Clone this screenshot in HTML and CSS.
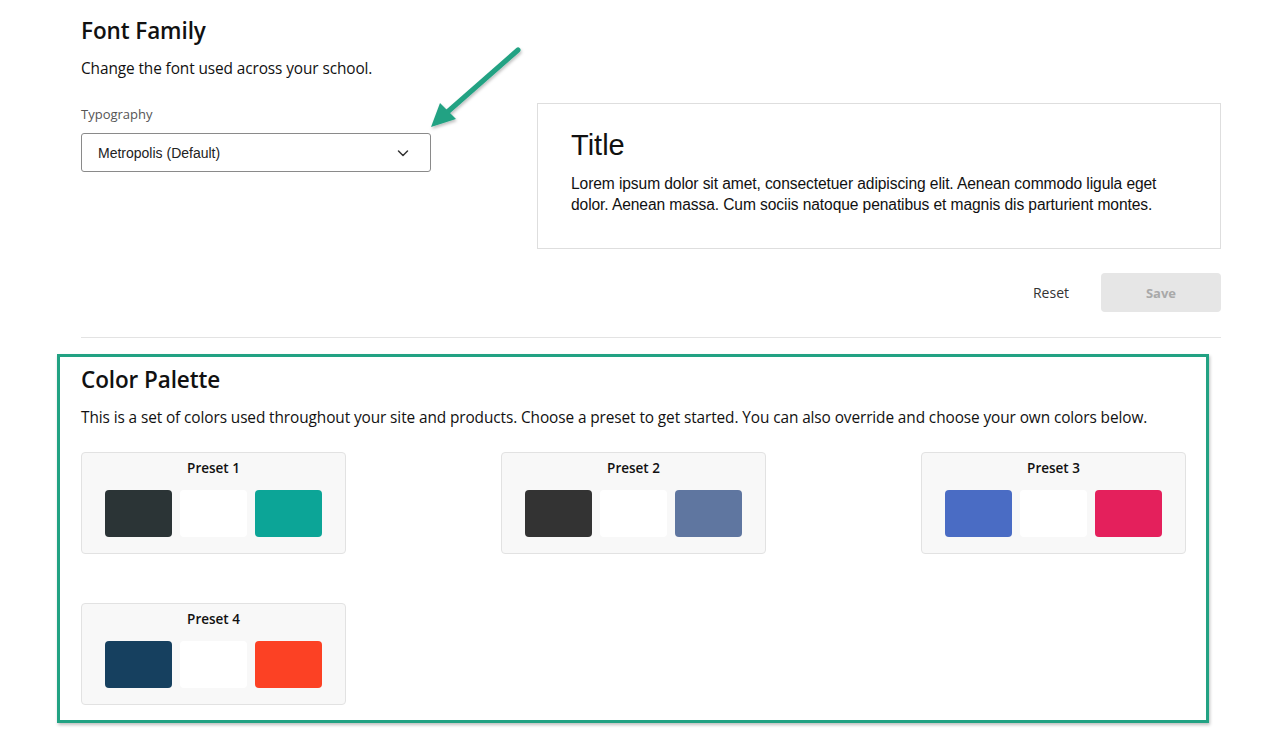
FILE: index.html
```html
<!DOCTYPE html>
<html lang="en">
<head>
    <meta charset="UTF-8">
    <meta name="viewport" content="width=device-width, initial-scale=1.0">
    <title>Branding - Fonts and Colors</title>
    <link rel="stylesheet" href="styles.css">
</head>
<body>
    <div class="page">
        <!-- Font family settings -->
        <section class="font-section">
            <div class="font-row">
                <div class="font-settings">
                    <h2 class="section-title">Font Family</h2>
                    <p class="section-desc">Change the font used across your school.</p>
                    <label class="field-label" for="typography">Typography</label>
                    <div class="select">
                        <span class="select-value" id="typography">Metropolis (Default)</span>
                        <svg class="select-chevron" width="14" height="14" viewBox="0 0 14 14">
                            <path d="M2.5 5 L7 9.5 L11.5 5" fill="none" stroke="#333" stroke-width="1.5" stroke-linecap="round" stroke-linejoin="round"/>
                        </svg>
                    </div>
                </div>
                <div class="preview">
                    <div class="preview-title">Title</div>
                    <p class="preview-text">Lorem ipsum dolor sit amet, consectetuer adipiscing elit. Aenean commodo ligula eget dolor. Aenean massa. Cum sociis natoque penatibus et magnis dis parturient montes.</p>
                </div>
            </div>
            <div class="actions">
                <button type="button" class="btn-reset">Reset</button>
                <button type="button" class="btn-save" disabled>Save</button>
            </div>

            <!-- pointer callout -->
            <svg class="callout-arrow" width="110" height="100" viewBox="0 0 110 100">
                <defs>
                    <filter id="arrowShadow" x="-20%" y="-20%" width="140%" height="140%">
                        <feDropShadow dx="1" dy="2" stdDeviation="1.5" flood-color="#000" flood-opacity="0.25"/>
                    </filter>
                </defs>
                <g filter="url(#arrowShadow)">
                    <line x1="96" y1="11" x2="22" y2="76" stroke="#22a283" stroke-width="5" stroke-linecap="round"/>
                    <polygon points="9,88 18,64 34,80" fill="#22a283"/>
                </g>
            </svg>
        </section>

        <hr class="divider">

        <!-- Color palette presets -->
        <section class="palette-section">
            <h2 class="section-title">Color Palette</h2>
            <p class="section-desc">This is a set of colors used throughout your site and products. Choose a preset to get started. You can also override and choose your own colors below.</p>

            <div class="presets">
                <div class="preset">
                    <div class="preset-name">Preset 1</div>
                    <div class="swatches">
                        <span class="swatch" style="background:#2b3436"></span>
                        <span class="swatch" style="background:#ffffff"></span>
                        <span class="swatch" style="background:#0ca597"></span>
                    </div>
                </div>
                <div class="preset">
                    <div class="preset-name">Preset 2</div>
                    <div class="swatches">
                        <span class="swatch" style="background:#333333"></span>
                        <span class="swatch" style="background:#ffffff"></span>
                        <span class="swatch" style="background:#5f76a0"></span>
                    </div>
                </div>
                <div class="preset">
                    <div class="preset-name">Preset 3</div>
                    <div class="swatches">
                        <span class="swatch" style="background:#4a6cc4"></span>
                        <span class="swatch" style="background:#ffffff"></span>
                        <span class="swatch" style="background:#e4205c"></span>
                    </div>
                </div>
                <div class="preset">
                    <div class="preset-name">Preset 4</div>
                    <div class="swatches">
                        <span class="swatch" style="background:#16405f"></span>
                        <span class="swatch" style="background:#ffffff"></span>
                        <span class="swatch" style="background:#fc4124"></span>
                    </div>
                </div>
            </div>

            <div class="highlight-frame"></div>
        </section>
    </div>
</body>
</html>
```

FILE: styles.css
```css
body {
    margin: 0;
    font-family: "Open Sans", "Noto Sans", sans-serif;
    color: #111;
    background-color: #fff;
}
.page {
    width: 1140px;
    margin-left: 81px;
    padding-top: 15px;
}
.font-section {
    position: relative;
}
.font-row {
    display: flex;
    justify-content: space-between;
}
.font-settings {
    width: 350px;
}
.section-title {
    margin: 0;
    font-size: 22.5px;
    font-weight: 600;
    line-height: 32px;
    letter-spacing: -0.1px;
}
.section-desc {
    margin: 11px 0 0;
    font-size: 15.4px;
    line-height: 22px;
    letter-spacing: -0.1px;
}
.field-label {
    display: block;
    margin-top: 25px;
    font-size: 13px;
    line-height: 18px;
    color: #555;
}
.select {
    display: flex;
    align-items: center;
    justify-content: space-between;
    height: 39px;
    margin-top: 10px;
    padding: 0 20px 0 16px;
    border: 1px solid #8a8a8a;
    border-radius: 3px;
    box-sizing: border-box;
}
.select-value {
    font-family: "Liberation Sans", Arial, sans-serif;
    font-size: 14px;
    color: #222;
}
.preview {
    width: 684px;
    height: 146px;
    margin-top: 88px;
    padding: 23px 40px 0 33px;
    border: 1px solid #dedede;
    box-sizing: border-box;
    font-family: "Liberation Sans", Arial, sans-serif;
}
.preview-title {
    font-size: 29px;
    line-height: 36px;
    color: #111;
}
.preview-text {
    margin: 10px 0 0;
    font-size: 15.6px;
    line-height: 21px;
    letter-spacing: -0.1px;
    color: #111;
}
.actions {
    display: flex;
    justify-content: flex-end;
    align-items: center;
    gap: 32px;
    margin-top: 24px;
}
.btn-reset {
    border: none;
    background: none;
    padding: 0;
    font-family: inherit;
    font-size: 14px;
    color: #333;
    cursor: pointer;
}
.btn-save {
    width: 120px;
    height: 39px;
    border: none;
    border-radius: 4px;
    background-color: #e6e6e6;
    color: #a9a9a9;
    font-family: inherit;
    font-size: 13px;
    font-weight: 700;
}
.callout-arrow {
    position: absolute;
    left: 341px;
    top: 24px;
}
.divider {
    margin: 25px 0 0;
    border: none;
    border-top: 1px solid #e3e3e3;
}
.palette-section {
    position: relative;
    padding-top: 26px;
    padding-bottom: 24px;
}
.palette-section .section-desc {
    margin-top: 11px;
}
.presets {
    display: grid;
    grid-template-columns: repeat(3, 265px);
    column-gap: 155px;
    row-gap: 49px;
    margin-top: 23px;
}
.preset {
    height: 102px;
    padding-top: 7px;
    background-color: #f8f8f8;
    border: 1px solid #e2e2e2;
    border-radius: 4px;
    box-sizing: border-box;
}
.preset-name {
    text-align: center;
    font-size: 13.5px;
    font-weight: 600;
    line-height: 17px;
}
.swatches {
    display: flex;
    justify-content: center;
    gap: 8px;
    margin-top: 13px;
}
.swatch {
    width: 67px;
    height: 47px;
    border-radius: 4px;
}
.highlight-frame {
    position: absolute;
    left: -24px;
    top: 16px;
    width: 1152px;
    height: 369px;
    border: 3px solid #22a283;
    box-sizing: border-box;
    box-shadow: 1px 2px 3px rgba(0, 0, 0, 0.25);
    pointer-events: none;
}
```
